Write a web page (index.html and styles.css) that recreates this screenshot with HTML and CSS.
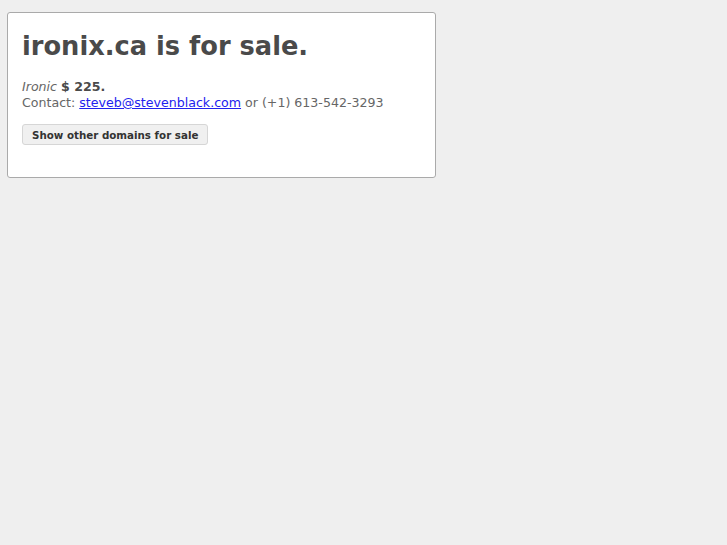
FILE: index.html
```html
<!DOCTYPE html>
<html lang="en">
<head>
    <meta charset="UTF-8">
    <title>ironix.ca is for sale.</title>
    <link rel="stylesheet" href="styles.css">
</head>
<body>
    <div class="box">
        <h1>ironix.ca is for sale.</h1>
        <p class="info">
            <em>Ironic</em> <strong>$ 225.</strong><br>
            Contact: <a href="mailto:steveb@stevenblack.com">steveb@stevenblack.com</a> or (+1) 613-542-3293
        </p>
        <button class="more">Show other domains for sale</button>
    </div>
</body>
</html>
```

FILE: styles.css
```css
body {
    margin: 0;
    padding: 12px 0 0 7px;
    background-color: #efefef;
    font-family: 'DejaVu Sans', sans-serif;
    font-size: 12.6px;
    line-height: 16px;
    color: #666;
}
.box {
    width: 399px;
    padding: 14px 14px 32px 14px;
    background-color: #fff;
    border: 1px solid #aaa;
    border-radius: 3px;
}
h1 {
    margin: 0 0 14px 0;
    font-size: 25.7px;
    line-height: 38px;
    color: #4a4a4a;
}
.info {
    margin: 0 0 13px 0;
}
.info strong {
    color: #4a4a4a;
}
.info a {
    color: #2222ee;
}
.more {
    font-family: 'DejaVu Sans', sans-serif;
    font-size: 10.3px;
    font-weight: bold;
    color: #333;
    height: 21px;
    padding: 0 9px;
    background-color: #f0f0f0;
    border: 1px solid #d6d6d6;
    border-radius: 3px;
}
```
